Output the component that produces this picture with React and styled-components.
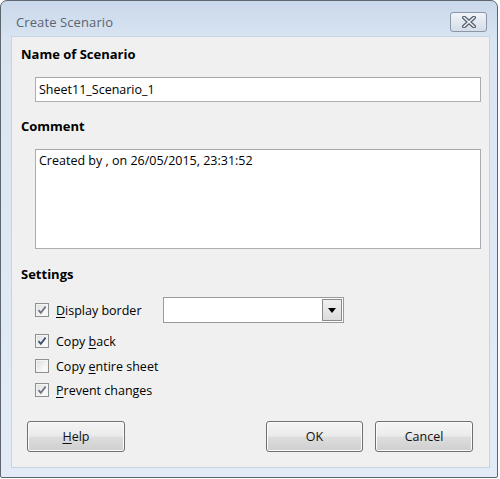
import React from "react";
import styled, { createGlobalStyle } from "styled-components";

const Global = createGlobalStyle`
  html, body { margin: 0; padding: 0; background: #ffffff; }
  body { font-family: "Open Sans", "Noto Sans", sans-serif; }
`;

const Window = styled.div`
  box-sizing: border-box;
  width: 498px;
  height: 478px;
  border: 1px solid #5d656f;
  border-radius: 7px 7px 2px 2px;
  background: linear-gradient(180deg, #c9d8ea 0px, #dae5f2 40px, #e3ecf6 100%);
  display: flex;
  flex-direction: column;
  padding: 0 7px 9px 10px;
`;

const TitleBar = styled.div`
  height: 35px;
  display: flex;
  align-items: center;
  justify-content: space-between;
  padding: 6px 3px 0 5px;
  box-sizing: border-box;
`;

const Title = styled.span`
  font-size: 13px;
  color: #5b6470;
  letter-spacing: 0.1px;
`;

const CloseButton = styled.div`
  box-sizing: border-box;
  width: 37px;
  height: 20px;
  border: 1px solid #8b97a7;
  border-radius: 3px;
  background: linear-gradient(180deg, #f1f4f8 0%, #e1e8f0 50%, #d5dde8 100%);
  display: flex;
  align-items: center;
  justify-content: center;
`;

const Content = styled.div`
  flex: 1;
  background: #f0f0f0;
  border: 1px solid #c6d4e4;
  display: flex;
  flex-direction: column;
  padding: 9px 8px 15px 9px;
  font-size: 12.5px;
  color: #000;
`;

const Heading = styled.div`
  font-weight: 700;
  font-size: 13px;
  line-height: 16px;
  margin-top: ${p => p.$top || 0}px;
`;

const Indent = styled.div`
  margin-left: 14px;
  margin-top: ${p => p.$top || 0}px;
`;

const TextBox = styled.div`
  box-sizing: border-box;
  height: ${p => p.$height}px;
  border: 1px solid #abadb3;
  border-top-color: #a6a6a6;
  background: #ffffff;
  padding: ${p => (p.$multi ? "2px 3px" : "0 3px")};
  display: flex;
  align-items: ${p => (p.$multi ? "flex-start" : "center")};
  font-size: 12.5px;
  line-height: 17px;
`;

const Row = styled.div`
  display: flex;
  align-items: center;
  height: ${p => p.$height || 20}px;
  margin-top: ${p => p.$top || 0}px;
`;

const Box = styled.div`
  box-sizing: border-box;
  width: 14px;
  height: 14px;
  border: 1px solid #8e8f8f;
  background: linear-gradient(135deg, #dcdcdc 0%, #f4f4f4 60%, #ffffff 100%);
  box-shadow: inset 0 0 0 1px #f4f4f4;
  display: flex;
  align-items: center;
  justify-content: center;
  flex-shrink: 0;
`;

const Label = styled.span`
  margin-left: 7px;
  width: ${p => (p.$width ? `${p.$width}px` : "auto")};
  font-size: 12.5px;
  white-space: nowrap;
`;

const Key = styled.span`
  text-decoration: underline;
  text-underline-offset: 2px;
`;

const Select = styled.div`
  box-sizing: border-box;
  width: 181px;
  height: 26px;
  border: 1px solid #9a9a9a;
  background: #ffffff;
  display: flex;
  justify-content: flex-end;
  padding: 1px;
`;

const SelectArrow = styled.div`
  width: 18px;
  border: 1px solid #8a8a8a;
  background: linear-gradient(180deg, #f0f0f0 0%, #dcdcdc 100%);
  display: flex;
  align-items: center;
  justify-content: center;
`;

const Buttons = styled.div`
  margin-top: auto;
  display: flex;
  align-items: center;
  padding: 0 8px 0 6px;
  gap: 12px;
`;

const Spacer = styled.div`
  flex: 1;
`;

const Button = styled.div`
  box-sizing: border-box;
  width: ${p => p.$width || 98}px;
  height: 31px;
  border: 1px solid #707070;
  border-radius: 3px;
  background: linear-gradient(180deg, #f4f4f4 0%, #ebebeb 48%, #dddddd 52%, #cfcfcf 100%);
  box-shadow: inset 0 0 0 1px #fbfbfb;
  display: flex;
  align-items: center;
  justify-content: center;
  font-size: 12.5px;
  color: #111;
`;

const Check = ({ on, dim }) => (
  <Box>
    {on && (
      <svg width="10" height="10" viewBox="0 0 10 10">
        <path
          d="M1.5 5.2 L3.8 7.8 L8.6 1.6"
          fill="none"
          stroke={dim ? "#6d7586" : "#3d4f72"}
          strokeWidth="1.8"
        />
      </svg>
    )}
  </Box>
);

export default function App() {
  return (
    <>
      <Global />
      <Window>
        <TitleBar>
          <Title>Create Scenario</Title>
          <CloseButton>
            <svg width="16" height="12" viewBox="0 0 16 12">
              <path d="M3 1.5 L13 10.5 M13 1.5 L3 10.5" stroke="#56606e" strokeWidth="4" strokeLinecap="round" />
              <path d="M3 1.5 L13 10.5 M13 1.5 L3 10.5" stroke="#eef1f5" strokeWidth="1.6" strokeLinecap="round" />
            </svg>
          </CloseButton>
        </TitleBar>
        <Content>
          <Heading>Name of Scenario</Heading>
          <Indent $top={15}>
            <TextBox $height={25}>Sheet11_Scenario_1</TextBox>
          </Indent>
          <Heading $top={16}>Comment</Heading>
          <Indent $top={15}>
            <TextBox $height={100} $multi>Created by , on 26/05/2015, 23:31:52</TextBox>
          </Indent>
          <Heading $top={17}>Settings</Heading>
          <Indent $top={15}>
            <Row $height={26}>
              <Check on dim />
              <Label $width={107}>
                <Key>D</Key>isplay border
              </Label>
              <Select>
                <SelectArrow>
                  <svg width="8" height="5" viewBox="0 0 8 5">
                    <path d="M0 0 H8 L4 5 Z" fill="#000" />
                  </svg>
                </SelectArrow>
              </Select>
            </Row>
            <Row $top={8}>
              <Check on />
              <Label>
                Copy <Key>b</Key>ack
              </Label>
            </Row>
            <Row $top={5}>
              <Check />
              <Label>
                Copy <Key>e</Key>ntire sheet
              </Label>
            </Row>
            <Row $top={4}>
              <Check on dim />
              <Label>
                <Key>P</Key>revent changes
              </Label>
            </Row>
          </Indent>
          <Buttons>
            <Button $width={98}>
              <span>
                <Key>H</Key>elp
              </span>
            </Button>
            <Spacer />
            <Button $width={97}>OK</Button>
            <Button $width={98}>Cancel</Button>
          </Buttons>
        </Content>
      </Window>
    </>
  );
}
